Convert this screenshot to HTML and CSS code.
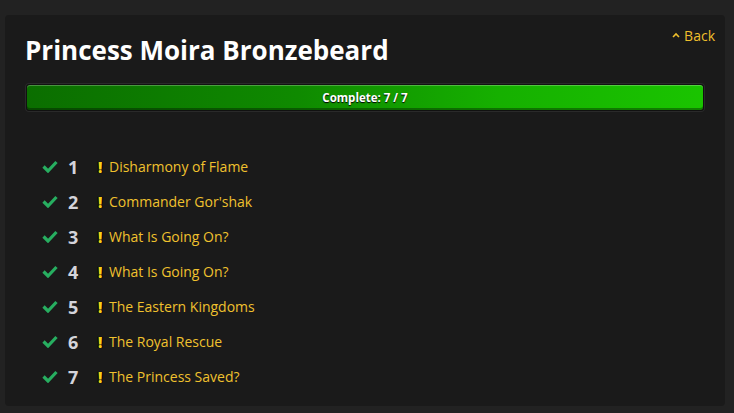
FILE: index.html
```html
<!DOCTYPE html>
<html>
<head>
<meta charset="utf-8">
<link rel="stylesheet" href="styles.css">
</head>
<body>
<div class="panel">
  <div class="header">
    <h1 class="title">Princess Moira Bronzebeard</h1>
    <a class="back"><svg class="caret" viewBox="0 0 8 6"><path d="M1 5 L4 2 L7 5" fill="none" stroke="#efbf2c" stroke-width="1.6"/></svg>Back</a>
  </div>
  <div class="track">
    <div class="bar">Complete: 7 / 7</div>
  </div>
  <ul class="quests">
    <li class="quest"><svg class="check" viewBox="0 0 16 13"><path d="M1.5 6.5 L6 11 L14.5 2" fill="none" stroke="#27ae60" stroke-width="3.2"/></svg><span class="num">1</span><span class="bang">!</span><span class="name">Disharmony of Flame</span></li>
    <li class="quest"><svg class="check" viewBox="0 0 16 13"><path d="M1.5 6.5 L6 11 L14.5 2" fill="none" stroke="#27ae60" stroke-width="3.2"/></svg><span class="num">2</span><span class="bang">!</span><span class="name">Commander Gor'shak</span></li>
    <li class="quest"><svg class="check" viewBox="0 0 16 13"><path d="M1.5 6.5 L6 11 L14.5 2" fill="none" stroke="#27ae60" stroke-width="3.2"/></svg><span class="num">3</span><span class="bang">!</span><span class="name">What Is Going On?</span></li>
    <li class="quest"><svg class="check" viewBox="0 0 16 13"><path d="M1.5 6.5 L6 11 L14.5 2" fill="none" stroke="#27ae60" stroke-width="3.2"/></svg><span class="num">4</span><span class="bang">!</span><span class="name">What Is Going On?</span></li>
    <li class="quest"><svg class="check" viewBox="0 0 16 13"><path d="M1.5 6.5 L6 11 L14.5 2" fill="none" stroke="#27ae60" stroke-width="3.2"/></svg><span class="num">5</span><span class="bang">!</span><span class="name">The Eastern Kingdoms</span></li>
    <li class="quest"><svg class="check" viewBox="0 0 16 13"><path d="M1.5 6.5 L6 11 L14.5 2" fill="none" stroke="#27ae60" stroke-width="3.2"/></svg><span class="num">6</span><span class="bang">!</span><span class="name">The Royal Rescue</span></li>
    <li class="quest"><svg class="check" viewBox="0 0 16 13"><path d="M1.5 6.5 L6 11 L14.5 2" fill="none" stroke="#27ae60" stroke-width="3.2"/></svg><span class="num">7</span><span class="bang">!</span><span class="name">The Princess Saved?</span></li>
  </ul>
</div>
</body>
</html>
```
FILE: styles.css
```css
html, body {
  margin: 0;
  padding: 0;
  background: #222222;
  font-family: "Open Sans", "Liberation Sans", sans-serif;
}
body {
  padding: 15px 9px 7px 5px;
  height: 413px;
  box-sizing: border-box;
}
.panel {
  background: #1a1a1a;
  border-radius: 4px;
  height: 391px;
  box-sizing: border-box;
  padding: 20px 20px 0 20px;
}
.header {
  display: flex;
  justify-content: space-between;
  align-items: flex-start;
}
.title {
  margin: 0;
  color: #ffffff;
  font-size: 26px;
  font-weight: 700;
  line-height: 30px;
}
.back {
  color: #efbf2c;
  font-size: 14px;
  line-height: 18px;
  margin-top: -8px;
  margin-right: -10px;
  display: flex;
  align-items: center;
}
.caret {
  width: 8px;
  height: 6px;
  margin-right: 4px;
  position: relative;
  top: -1px;
}
.track {
  margin-top: 18px;
  height: 29px;
  box-sizing: border-box;
  background: #111;
  border-radius: 4px;
  padding: 2px;
  box-shadow: inset 0 0 0 1px #2a2a2a;
}
.bar {
  height: 25px;
  border-radius: 3px;
  background: linear-gradient(90deg, #0b6e00 0%, #0f8a00 40%, #16b000 70%, #1ac400 100%);
  box-shadow: inset 0 1px 0 rgba(255,255,255,0.25), inset 0 -2px 0 rgba(0,0,0,0.35);
  color: #fff;
  font-size: 11.5px;
  font-weight: 700;
  text-align: center;
  line-height: 25px;
  text-shadow: 0 1px 1px #000;
}
.quests {
  list-style: none;
  margin: 37px 0 0 0;
  padding: 0 0 0 17px;
}
.quest {
  display: flex;
  align-items: center;
  height: 35px;
}
.check {
  width: 16px;
  height: 13px;
  flex: none;
}
.num {
  width: 30px;
  margin-left: 10px;
  color: #d4d4da;
  font-size: 18px;
  font-weight: 700;
}
.bang {
  width: 11px;
  color: #f5d31a;
  font-size: 15px;
  font-weight: 800;
  text-shadow: 0 0 1px #000, 1px 0 0 #000, -1px 0 0 #000;
}
.name {
  color: #f0c12e;
  font-size: 14px;
}
```
